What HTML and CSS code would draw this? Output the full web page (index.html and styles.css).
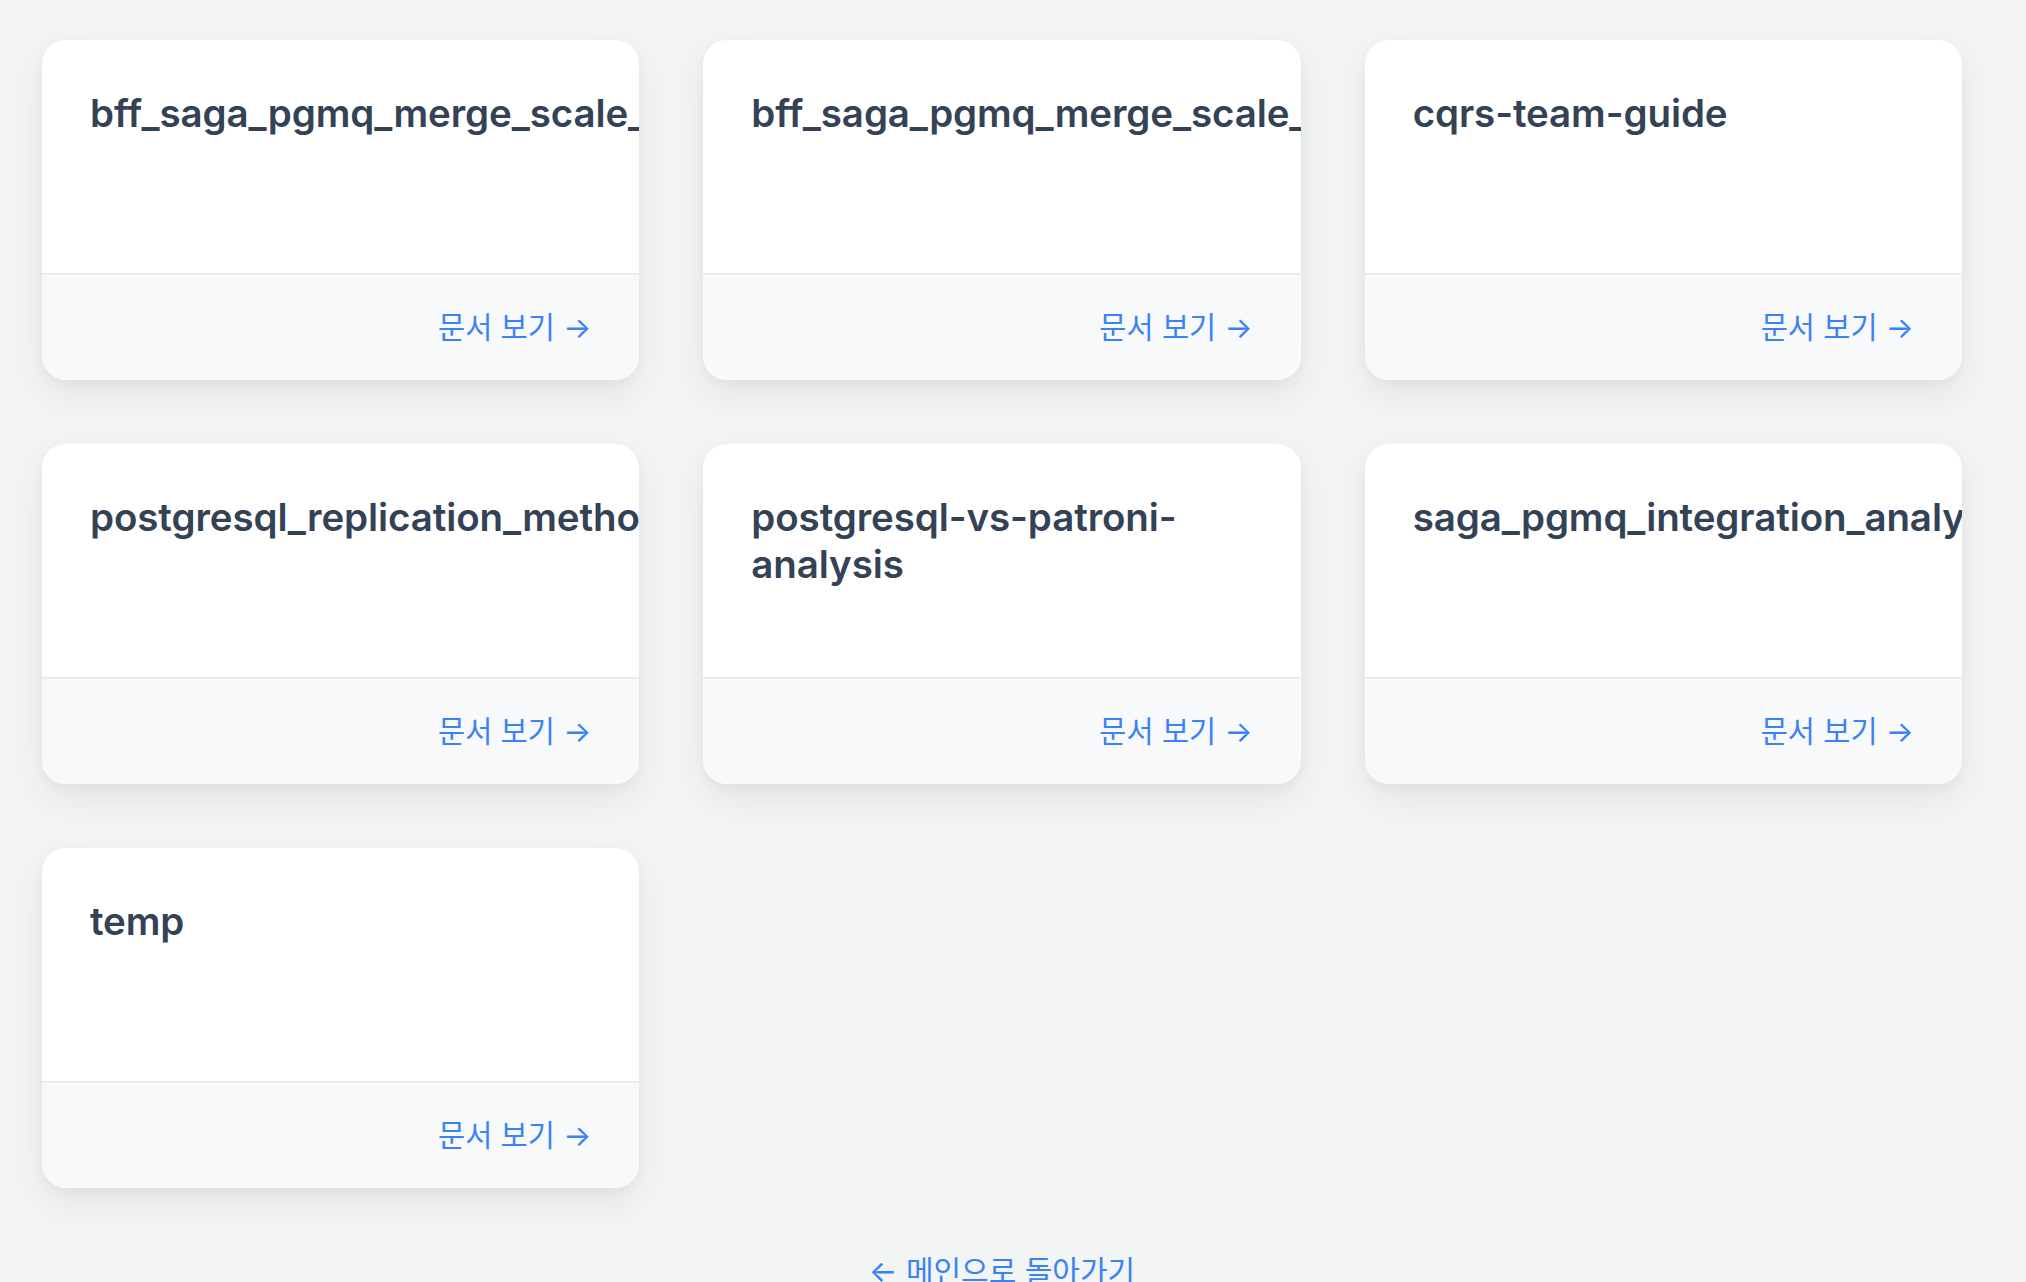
FILE: index.html
```html
<!DOCTYPE html>
<html lang="ko">
<head>
<meta charset="utf-8">
<title>문서 목록</title>
<link rel="stylesheet" href="styles.css">
</head>
<body>
<main class="page">
  <section class="grid">
    <article class="card">
      <div class="card-body"><h2 class="card-title">bff_saga_pgmq_merge_scale_analysis</h2></div>
      <div class="card-footer"><a class="card-link" href="#">문서 보기 →</a></div>
    </article>
    <article class="card">
      <div class="card-body"><h2 class="card-title">bff_saga_pgmq_merge_scale_review</h2></div>
      <div class="card-footer"><a class="card-link" href="#">문서 보기 →</a></div>
    </article>
    <article class="card">
      <div class="card-body"><h2 class="card-title">cqrs-team-guide</h2></div>
      <div class="card-footer"><a class="card-link" href="#">문서 보기 →</a></div>
    </article>
    <article class="card">
      <div class="card-body"><h2 class="card-title">postgresql_replication_methods</h2></div>
      <div class="card-footer"><a class="card-link" href="#">문서 보기 →</a></div>
    </article>
    <article class="card">
      <div class="card-body"><h2 class="card-title">postgresql-vs-patroni-analysis</h2></div>
      <div class="card-footer"><a class="card-link" href="#">문서 보기 →</a></div>
    </article>
    <article class="card">
      <div class="card-body"><h2 class="card-title">saga_pgmq_integration_analysis</h2></div>
      <div class="card-footer"><a class="card-link" href="#">문서 보기 →</a></div>
    </article>
    <article class="card">
      <div class="card-body"><h2 class="card-title">temp</h2></div>
      <div class="card-footer"><a class="card-link" href="#">문서 보기 →</a></div>
    </article>
  </section>
  <nav class="back">
    <a class="back-link" href="#">← 메인으로 돌아가기</a>
  </nav>
</main>
</body>
</html>
```

FILE: styles.css
```css
html, body {
  margin: 0;
  padding: 0;
}

body {
  background: #f3f4f4;
  font-family: Inter, "Noto Sans CJK KR", sans-serif;
  overflow: hidden;
}

.page {
  width: 1920px;
  margin-left: 42px;
  padding-top: 40px;
}

.grid {
  display: grid;
  grid-template-columns: repeat(3, 1fr);
  gap: 64px;
}

.card {
  background: #ffffff;
  border-radius: 24px;
  overflow: hidden;
  display: flex;
  flex-direction: column;
  box-shadow: 0 14px 36px rgba(0, 0, 0, 0.07), 0 4px 12px rgba(0, 0, 0, 0.03);
}

.card-body {
  height: 235px;
  box-sizing: border-box;
  padding: 50px 48px 48px;
  border-bottom: 2px solid #e9ebee;
}

.card-title {
  margin: 0;
  font-size: 38.5px;
  line-height: 47px;
  font-weight: 600;
  color: #344256;
  letter-spacing: -0.1px;
}

.card-footer {
  background: #f8f9fa;
  padding: 32px 48px 33px;
  display: flex;
  justify-content: flex-end;
}

.card-link {
  font-family: Inter, "Noto Sans CJK KR", sans-serif;
  font-size: 29.5px;
  line-height: 40px;
  color: #3b82f6;
  text-decoration: none;
}

.back {
  display: flex;
  justify-content: center;
  margin-top: 63px;
}

.back-link {
  font-family: Inter, "Noto Sans CJK KR", sans-serif;
  font-size: 30px;
  line-height: 40px;
  color: #3b82f6;
  text-decoration: none;
}
```
